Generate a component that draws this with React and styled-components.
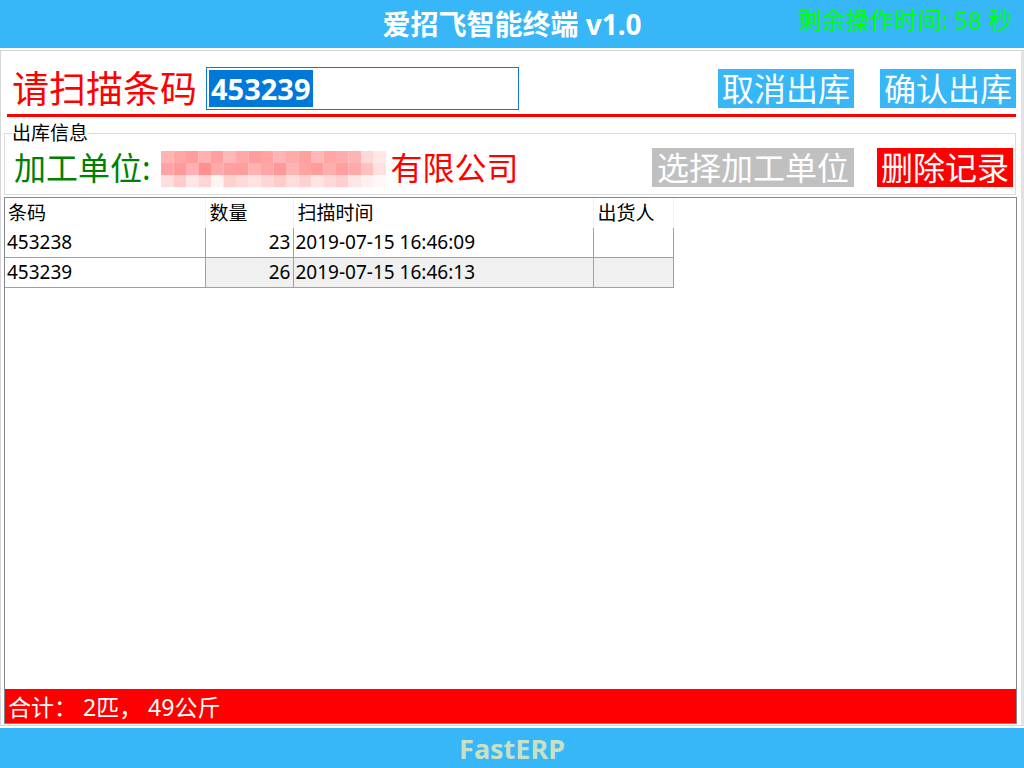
import React from "react";
import styled, { createGlobalStyle } from "styled-components";

const FONT = `"Noto Sans", "Noto Sans CJK SC", sans-serif`;
const BLUE = "#37b6f8";

const Global = createGlobalStyle`
  html, body { margin: 0; padding: 0; background: #fff; }
  body { font-family: ${FONT}; width: 1024px; height: 768px; overflow: hidden; }
`;

const Page = styled.div`
  width: 1024px; height: 768px; display: flex; flex-direction: column; row-gap: 2px;
`;

const Header = styled.header`
  height: 48px; background: ${BLUE}; flex-shrink: 0;
  display: grid; grid-template-columns: 1fr auto 1fr; align-items: center;
  & .title { grid-column: 2; color: #fff; font-size: 28px; font-weight: 700; line-height: 1; padding-bottom: 1px; }
  & .timer { grid-column: 3; justify-self: end; color: #00ff00; font-size: 24px; line-height: 1; margin-right: 12px; margin-bottom: 9px; }
`;

const Main = styled.main`
  flex: 1; min-height: 0; box-sizing: border-box; display: flex; flex-direction: column;
  border: 1px solid #d6d6d6; border-right: 3px solid #e2e2e2;
  padding: 0 4px 0 3px;
`;

const ScanRow = styled.div`
  margin: 16px 1px 0 8px; height: 43px; display: flex; align-items: center; column-gap: 9px;
`;

const Label = styled.span`
  color: ${p => p.$color || "#ff0000"}; font-size: ${p => p.$size || 32}px; line-height: 1; white-space: nowrap;
`;

const Input = styled.div`
  width: 313px; height: 43px; box-sizing: border-box; border: 1px solid #0a78d4;
  display: flex; align-items: center; padding-left: 2px;
  & span { background: #0078d7; color: #fff; font-size: 29px; font-weight: 700; line-height: 37px; padding: 0 2px; }
`;

const Spacer = styled.div` flex: 1; `;

const Button = styled.button`
  border: none; margin: 0; font-family: ${FONT}; font-size: 32px; line-height: 39px; height: 39px;
  padding: 0 ${p => p.$pad || 4}px; color: #fff; background: ${p => p.$bg}; white-space: nowrap; cursor: pointer;
  margin-left: ${p => p.$gap || 0}px;
`;

const RedLine = styled.div`
  height: 3px; background: #ff0000; margin: 4px 1px 0 3px;
`;

const Group = styled.fieldset`
  margin: 5px 1px 0 0; border: 1px solid #dcdcdc; padding: 4px 2px 7px 9px; min-width: 0;
  & legend { font-size: 19px; line-height: 22px; color: #000; padding: 0; margin-left: -2px; }
`;

const UnitRow = styled.div`
  height: 39px; display: flex; align-items: center;
`;

const Grid = styled.div`
  flex: 1; margin: 2px 0 1px; border: 1px solid #828790; display: flex; flex-direction: column; min-height: 0;
`;

const Table = styled.table`
  border-collapse: collapse; table-layout: fixed; width: 668px; font-size: 19px; color: #000;
`;

const Th = styled.th`
  height: 30px; padding: 0 0 0 ${p => p.$pl}px; text-align: left; font-weight: 400; box-sizing: border-box;
  border-right: 1px solid #f2f2f2; line-height: 28px; vertical-align: middle;
`;

const Td = styled.td`
  height: 27px; padding: 0 ${p => (p.$right ? 2 : 0)}px 0 ${p => (p.$right ? 0 : p.$pl)}px;
  text-align: ${p => (p.$right ? "right" : "left")}; background: ${p => (p.$shade ? "#f0f0f0" : "#fff")};
  border-bottom: 1px solid #a0a0a0; border-right: 1px solid #a0a0a0; line-height: 27px; white-space: nowrap;
`;

const Body = styled.div` flex: 1; `;

const Total = styled.div`
  height: 34px; background: #ff0000; color: #fff; font-size: 23px; display: flex; align-items: center;
  padding-left: 3px; white-space: pre;
`;

const Footer = styled.footer`
  height: 40px; flex-shrink: 0; background: ${BLUE}; display: flex; align-items: center; justify-content: center;
  & span { color: #c9e0c4; font-size: 27px; font-weight: 700; }
`;

const mosaic = [
  ["#ffb3b3", "#ffa6a6", "#ff9d9d", "#ffb0b0", "#ffa0a0", "#ffb8b8", "#ffa8a8", "#ff9c9c", "#ffa3a3", "#ffb5b5", "#ffaaaa", "#ffa0a0", "#ffb7b7", "#ffa6a6", "#ffacac", "#ffb4b4", "#ffd8d8", "#ffe8e8"],
  ["#ffa4a4", "#ff9a9a", "#ffb0b0", "#ff9090", "#ffaaaa", "#ffa0a0", "#ff9e9e", "#ffb2b2", "#ffa5a5", "#ff9898", "#ffb4b4", "#ffa2a2", "#ff9c9c", "#ffadad", "#ff9f9f", "#ffa9a9", "#ffc0c0", "#ffe0e0"],
  ["#ffdede", "#ffcccc", "#ffe6e6", "#ffd4d4", "#fff4f4", "#ffd0d0", "#ffdada", "#ffe2e2", "#ffd6d6", "#ffcaca", "#ffdcdc", "#ffd2d2", "#ffe4e4", "#ffd8d8", "#ffcfcf", "#ffe6e6", "#fff0f0", "#fff8f8"],
];

const Blur = () => (
  <svg width="228" height="40" viewBox="0 0 228 40" style={{ margin: "0 2px 0 10px", flexShrink: 0 }}>
    {mosaic.map((row, r) =>
      row.map((c, i) => <rect key={`${r}-${i}`} x={i * 12.5} y={r * 12 + 3} width="12.6" height="12.2" fill={c} />)
    )}
  </svg>
);

const rows = [
  { code: "453238", qty: 23, time: "2019-07-15 16:46:09", shade: false },
  { code: "453239", qty: 26, time: "2019-07-15 16:46:13", shade: true },
];

export default function App() {
  return (
    <Page>
      <Global />
      <Header>
        <span className="title">爱招飞智能终端 v1.0</span>
        <span className="timer">剩余操作时间: 58 秒</span>
      </Header>
      <Main>
        <ScanRow>
          <Label $size={37}>请扫描条码</Label>
          <Input><span>453239</span></Input>
          <Spacer />
          <Button $bg={BLUE}>取消出库</Button>
          <Button $bg={BLUE} $gap={17}>确认出库</Button>
        </ScanRow>
        <RedLine />
        <Group>
          <legend>出库信息</legend>
          <UnitRow>
            <Label $color="#008000">加工单位:</Label>
            <Blur />
            <Label>有限公司</Label>
            <Spacer />
            <Button $bg="#c0c0c0" $pad={5}>选择加工单位</Button>
            <Button $bg="#ff0000" $gap={23}>删除记录</Button>
          </UnitRow>
        </Group>
        <Grid>
          <Body>
            <Table>
              <colgroup>
                <col style={{ width: 200 }} />
                <col style={{ width: 88 }} />
                <col style={{ width: 300 }} />
                <col style={{ width: 80 }} />
              </colgroup>
              <thead>
                <tr>
                  <Th $pl={3}>条码</Th>
                  <Th $pl={4}>数量</Th>
                  <Th $pl={4}>扫描时间</Th>
                  <Th $pl={4}>出货人</Th>
                </tr>
              </thead>
              <tbody>
                {rows.map(r => (
                  <tr key={r.code}>
                    <Td $pl={2}>{r.code}</Td>
                    <Td $right $shade={r.shade}>{r.qty}</Td>
                    <Td $pl={2} $shade={r.shade}>{r.time}</Td>
                    <Td $shade={r.shade}></Td>
                  </tr>
                ))}
              </tbody>
            </Table>
          </Body>
          <Total>{"合计： 2匹， 49公斤"}</Total>
        </Grid>
      </Main>
      <Footer><span>FastERP</span></Footer>
    </Page>
  );
}
